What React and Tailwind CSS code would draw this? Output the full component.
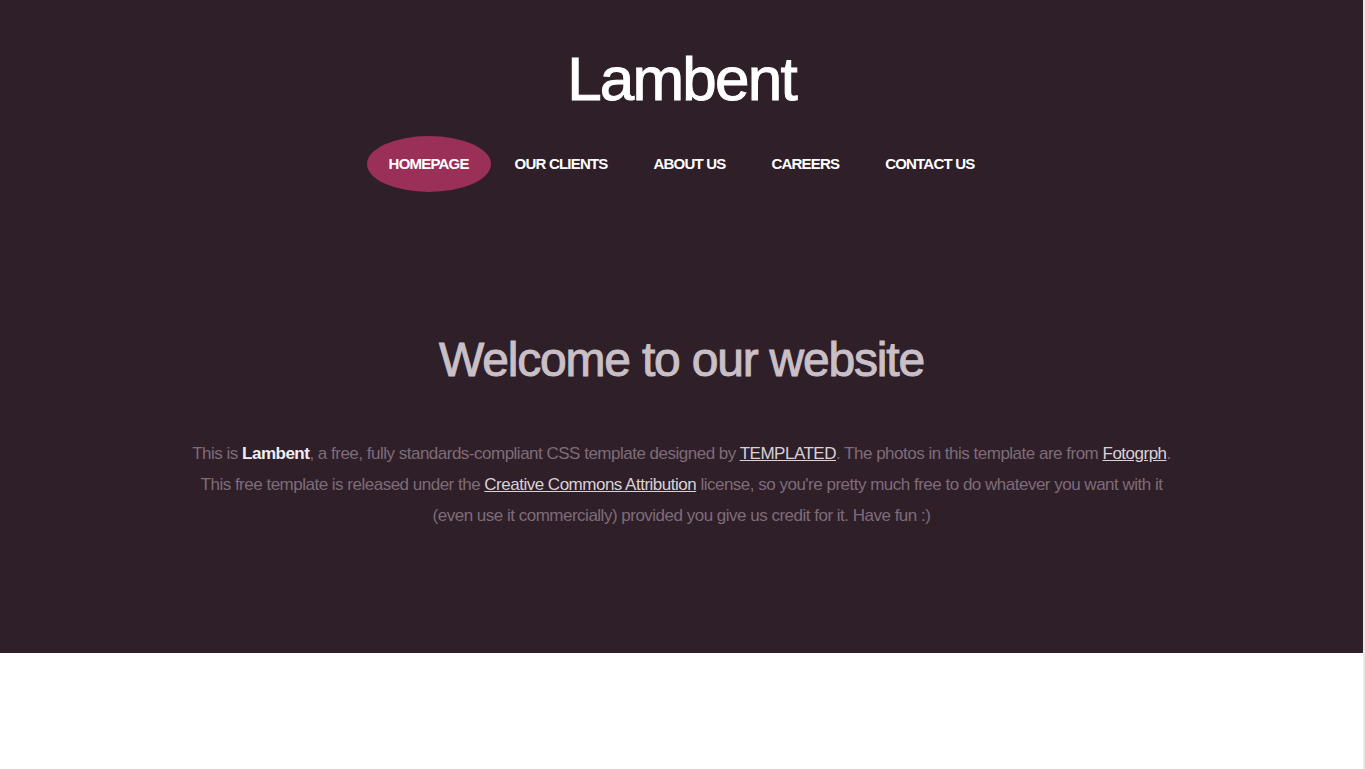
const navItems = ['Homepage', 'Our Clients', 'About Us', 'Careers', 'Contact Us'];

const NavItem = ({ label, active }) => (
    <li>
        <a
            href="#"
            className={
                'flex h-[56px] items-center px-[22px] text-[15px] font-bold uppercase tracking-[-0.8px] text-white ' +
                (active ? 'rounded-[50%] bg-[#9a2f58]' : '')
            }
        >
            {label}
        </a>
    </li>
);

export default function App() {
    return (
        <div className="flex min-h-[769px] bg-white font-['Liberation_Sans',Arial,sans-serif]">
            <div className="w-[1363px]">
                <section className="flex h-[653px] flex-col items-center bg-[#2f1f29]">
                    <h1 className="mt-[42px] text-[62px] leading-[74px] tracking-[-1.8px] text-white [-webkit-text-stroke:1px_white]">
                        Lambent
                    </h1>
                    <nav className="mt-[20px]">
                        <ul className="flex gap-[2px]">
                            {navItems.map((item, i) => (
                                <NavItem key={item} label={item} active={i === 0} />
                            ))}
                        </ul>
                    </nav>
                    <h2 className="mt-[138px] text-[48px] leading-[60px] tracking-[-1.2px] text-[#c9bfc6] [-webkit-text-stroke:1px_#c9bfc6]">
                        Welcome to our website
                    </h2>
                    <p className="mt-[48px] w-[1000px] text-center text-[17px] leading-[31px] tracking-[-0.5px] text-[#7e6c78]">
                        This is <strong className="text-[#f2eef0]">Lambent</strong>, a free, fully standards-compliant CSS template designed by{' '}
                        <a href="#" className="text-[#d9d1d6] underline">TEMPLATED</a>. The photos in this template are from{' '}
                        <a href="#" className="text-[#d9d1d6] underline">Fotogrph</a>. This free template is released under the{' '}
                        <a href="#" className="text-[#d9d1d6] underline">Creative Commons Attribution</a> license, so you're pretty much free to do whatever you want with it (even use it commercially) provided you give us credit for it. Have fun :)
                    </p>
                </section>
            </div>
            <div className="w-[2px] bg-[#e8e8e8]" />
        </div>
    );
}
